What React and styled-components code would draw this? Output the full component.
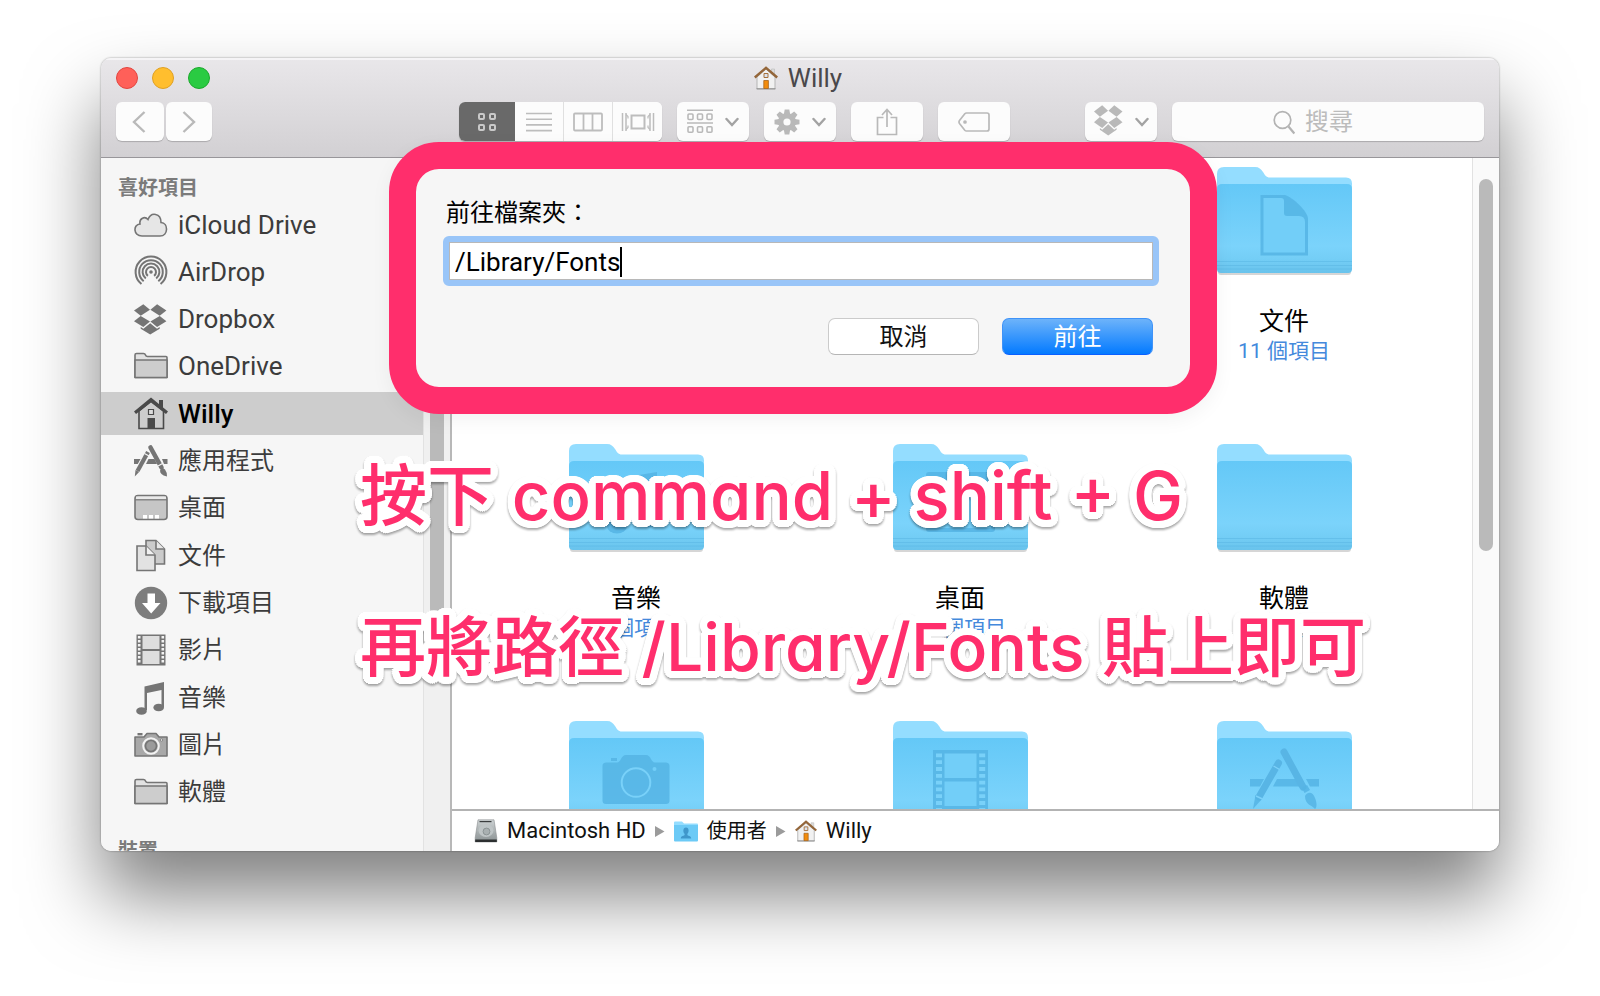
import React from 'react';
import styled, { createGlobalStyle } from 'styled-components';

const GlobalStyle = createGlobalStyle`
  * {
    box-sizing: border-box;
  }
  body {
    margin: 0;
    background: #fff;
    font-family: Roboto, "Noto Sans CJK TC", sans-serif;
  }
  button,
  input {
    font: inherit;
    margin: 0;
    padding: 0;
    border: 0;
  }
  a {
    color: inherit;
    text-decoration: none;
  }
  svg {
    display: block;
    flex: none;
  }
`;

const Page = styled.main`
  min-height: 100vh;
  padding: 58px 101px 145px;
  overflow: hidden;
`;
const Window = styled.section`
  position: relative;
  display: flex;
  flex-direction: column;
  height: calc(100vh - 203px);
`;
const Frame = styled.div`
  flex: 1;
  min-height: 0;
  display: flex;
  flex-direction: column;
  border-radius: 10px;
  overflow: hidden;
  background: #fff;
  box-shadow: 0 0 2px rgba(0, 0, 0, 0.45), 0 44px 75px rgba(0, 0, 0, 0.5);
`;

const Header = styled.header`
  padding: 0 15px 16px;
  border-bottom: 1px solid #98969a;
  background: linear-gradient(#e9e7ea, #d2d0d3);
  box-shadow: inset 0 2px 0 #f5f4f6;
`;
const TitleRow = styled.div`
  display: grid;
  grid-template-columns: 1fr auto 1fr;
  align-items: center;
  height: 40px;
  margin-bottom: 4px;
`;
const Lights = styled.div`
  display: flex;
  gap: 14px;
`;
const Light = styled.button`
  width: 22px;
  height: 22px;
  border-radius: 50%;
  border: 1px solid ${(p) => p.$edge};
  background: ${(p) => p.$color};
`;
const Title = styled.h1`
  display: flex;
  align-items: center;
  gap: 10px;
  margin: 0;
  padding-right: 4px;
  font-size: 26px;
  font-weight: 400;
  line-height: 30px;
  color: #4a484b;
`;
const Toolbar = styled.div`
  display: flex;
  gap: 15px;
`;
const Nav = styled.div`
  display: flex;
  gap: 2px;
  width: 328px;
`;
const ToolButton = styled.button`
  display: flex;
  align-items: center;
  justify-content: center;
  gap: 12px;
  width: ${(p) => p.$width || 72}px;
  height: 39px;
  border-radius: 6px;
  background: #fcfcfc;
  color: #b9b9b9;
  box-shadow: 0 1px 1px rgba(0, 0, 0, 0.2);
  margin-left: ${(p) => (p.$push ? 'auto' : 0)};
`;
const Views = styled.div`
  display: flex;
  border-radius: 6px;
  overflow: hidden;
  background: #fcfcfc;
  box-shadow: 0 1px 1px rgba(0, 0, 0, 0.2);
`;
const ViewButton = styled.button`
  display: flex;
  align-items: center;
  justify-content: center;
  width: ${(p) => (p.$active ? 56 : 49)}px;
  height: 39px;
  border-right: 1px solid #e0e0e0;
  background: ${(p) => (p.$active ? '#696969' : '#fcfcfc')};
  color: ${(p) => (p.$active ? '#c9c9c9' : '#bdbdbd')};
  &:first-child,
  &:last-child {
    border-right: 0;
  }
`;
const Search = styled.label`
  display: flex;
  align-items: center;
  gap: 10px;
  width: 312px;
  height: 39px;
  padding-left: 101px;
  border-radius: 6px;
  background: #fcfcfc;
  box-shadow: 0 1px 1px rgba(0, 0, 0, 0.2);
`;
const SearchInput = styled.input`
  width: 100%;
  min-width: 0;
  background: transparent;
  font-size: 24px;
  line-height: 36px;
  outline: none;
  &::placeholder {
    color: #bcbcbc;
    opacity: 1;
  }
`;

const Body = styled.div`
  flex: 1;
  min-height: 0;
  display: flex;
`;
const Sidebar = styled.nav`
  flex: none;
  width: 322px;
  padding-top: 15px;
  background: #f6f6f6;
  overflow: hidden;
`;
const SideHeading = styled.h2`
  margin: 0;
  padding-left: 17px;
  font-size: 20px;
  font-weight: 700;
  line-height: 30px;
  color: #7b7b7b;
`;
const SideList = styled.ul`
  display: flex;
  flex-direction: column;
  justify-content: space-between;
  height: 611px;
  margin: 0 0 22px;
  padding: 0;
  list-style: none;
`;
const SideLink = styled.a`
  display: flex;
  align-items: center;
  gap: 10px;
  height: 43px;
  padding-left: 33px;
  font-size: ${(p) => (p.$latin ? 26 : 24)}px;
  font-weight: ${(p) => (p.$active ? 500 : 400)};
  line-height: 36px;
  color: ${(p) => (p.$active ? '#000' : '#3c3c3c')};
  background: ${(p) => (p.$active ? '#cdcdcd' : 'transparent')};
`;
const Track = styled.div`
  flex: none;
  display: flex;
  justify-content: center;
  width: ${(p) => (p.$side ? 29 : 27)}px;
  padding-top: ${(p) => (p.$side ? 17 : 21)}px;
  border-left: 1px solid #e2e2e2;
  border-right: ${(p) => (p.$side ? '2px solid #b8b8b8' : '0')};
  background: ${(p) => (p.$side ? '#f0f0f0' : '#fafafa')};
`;
const Thumb = styled.div`
  width: 14px;
  height: ${(p) => p.$height}px;
  border-radius: 7px;
  background: #bababa;
`;
const Main = styled.div`
  flex: 1;
  min-width: 0;
  display: flex;
  flex-direction: column;
`;
const Content = styled.div`
  flex: 1;
  min-height: 0;
  display: flex;
`;
const Files = styled.div`
  flex: 1;
  display: grid;
  grid-template-columns: repeat(3, 1fr);
  grid-auto-rows: 277px;
  padding: 9px 26px 0 22px;
  overflow: hidden;
`;
const File = styled.a`
  display: flex;
  flex-direction: column;
  align-items: center;
  &:first-child {
    grid-column: 3;
  }
`;
const FileName = styled.span`
  margin-top: 29px;
  font-size: 25px;
  line-height: 32px;
  color: #000;
`;
const FileCount = styled.span`
  font-size: 21px;
  line-height: 26px;
  color: #4489dc;
`;
const PathBar = styled.footer`
  flex: none;
  display: flex;
  align-items: center;
  gap: 9px;
  height: 42px;
  padding: 0 22px;
  border-top: 2px solid #b3b3b3;
  background: #fff;
`;
const Crumb = styled.a`
  display: flex;
  align-items: center;
  gap: 9px;
  font-size: ${(p) => (p.$latin ? 22 : 20)}px;
  line-height: 30px;
  color: #111;
`;

const Dialog = styled.form`
  position: absolute;
  top: 84px;
  left: 288px;
  right: 282px;
  display: flex;
  flex-direction: column;
  height: 272px;
  padding: 25px 31px 32px 27px;
  border: 27px solid #ff2e6c;
  border-radius: 50px;
  background: #f6f6f6;
  box-shadow: 0 6px 20px rgba(0, 0, 0, 0.05);
`;
const DialogLabel = styled.label`
  padding-left: 3px;
  font-size: 24px;
  line-height: 38px;
  color: #000;
`;
const Field = styled.div`
  display: flex;
  align-items: center;
  height: 50px;
  margin-top: 4px;
  padding: 2px 0 0 6px;
  border: 6px solid #99c5f8;
  border-radius: 6px;
  background: #fff;
  box-shadow: inset 0 0 0 1px #b8b8b8;
`;
const PathInput = styled.input`
  field-sizing: content;
  background: transparent;
  font-size: 26px;
  line-height: 34px;
  outline: none;
`;
const Caret = styled.span`
  width: 2px;
  height: 30px;
  background: #000;
`;
const Actions = styled.div`
  display: flex;
  justify-content: flex-end;
  gap: 23px;
  margin-top: 32px;
  padding-right: 6px;
`;
const Action = styled.button`
  width: 151px;
  height: 37px;
  border: 1px solid ${(p) => (p.$primary ? '#3f93f8' : '#cbcbcb')};
  border-bottom-color: ${(p) => (p.$primary ? '#0a5fff' : '#b5b5b5')};
  border-radius: 7px;
  font-size: 24px;
  line-height: 34px;
  color: ${(p) => (p.$primary ? '#fff' : '#111')};
  background: ${(p) => (p.$primary ? 'linear-gradient(#6db3fa, #037aff)' : '#fff')};
`;

// rounded white outline, built from rings of hard shadows
const outline = [
  [7, 0], [7, 2], [6, 4], [5, 5], [4, 6], [2, 7], [0, 7],
  [4, 0], [3, 3], [0, 4],
]
  .flatMap(([x, y]) => [[x, y], [-x, y], [x, -y], [-x, -y]])
  .map(([x, y]) => `${x}px ${y}px 0 #fff`)
  .join(', ');

const Notes = styled.div`
  position: absolute;
  top: 388px;
  left: 259px;
`;
const Note = styled.p`
  margin: 0 0 51px;
  font-family: Inter, "Noto Sans CJK TC", sans-serif;
  font-size: ${(p) => (p.$large ? 67 : 66)}px;
  font-weight: 500;
  line-height: 100px;
  font-feature-settings: "cv11";
  white-space: nowrap;
  color: #ff2e6c;
  text-shadow: ${outline};
  filter: drop-shadow(0 2px 1px rgba(0, 0, 0, 0.35));
`;

const Chevron = () => (
  <svg width="14" height="10" viewBox="0 0 14 10" fill="none" stroke="#a3a3a3" strokeWidth="2.4" strokeLinecap="round">
    <path d="M1.5 2 7 8l5.500-6" />
  </svg>
);

const House = ({ size }) => (
  <svg width={size} height={size} viewBox="0 0 24 24">
    <path d="M17.500 3h3v5h-3z" fill="#dcdcdc" stroke="#b9b9b9" strokeWidth=".6" />
    <path d="M3 11 12 3l9 8v12H3z" fill="#f1f1f1" stroke="#b5b5b5" />
    <path d="M2.500 22.800h19" stroke="#8e8e8e" />
    <path d="M.8 11.500 12 1.800l11.200 9.700" fill="none" stroke="#94663a" strokeWidth="2.400" />
    <path d="M10 7.500h4v4h-4z" fill="#dce4ee" stroke="#a8713a" />
    <path d="M9.800 14.500h4.600v8H9.800z" fill="#f28c0c" stroke="#a9641a" strokeWidth=".8" />
  </svg>
);

const DropboxShape = () => (
  <g fill="currentColor">
    <path d="M0 6.500 9.300.3 16 5.800 6.700 11.800z" />
    <path d="M32.400 6.500 23.100.3l-6.700 5.500 9.300 6z" />
    <path d="M0 17.300l6.700-5.400L16 17.500l-6.700 5.500z" />
    <path d="M32.400 17.300l-6.700-5.400-9.300 5.600 6.700 5.500z" />
    <path d="M16.200 19.300 9.400 24.800l-2.700-1.700v1.700l9.500 5.600 9.500-5.600v-1.700L23 24.800z" />
  </g>
);

const Gear = () => (
  <svg width="26" height="26" viewBox="-13 -13 26 26">
    <circle r="6.300" fill="none" stroke="currentColor" strokeWidth="5.400" />
    {[0, 45, 90, 135, 180, 225, 270, 315].map((a) => (
      <path key={a} d="M-2.300-12.500h4.600l.8 4.500h-6.200z" fill="currentColor" transform={`rotate(${a})`} />
    ))}
  </svg>
);

const arc = (r) => {
  const x = r * 0.62;
  const y = r * 0.78;
  return `M${17 - x} ${17 + y}A${r} ${r} 0 1 1 ${17 + x} ${17 + y}`;
};

const line = { fill: 'none', stroke: '#757575', strokeWidth: 1.6 };

const sideIcons = {
  cloud: (
    <path
      d="M8 28C-1 28-1 16.500 6 16 5 10 11 8 14 11.500 17 3.500 27 5 27 14.500c7.500.5 7.500 13.500-1 13.500z"
      {...line}
      fill="#e6e6e6"
    />
  ),
  airdrop: (
    <g {...line} strokeWidth="2">
      <path d={arc(15.4)} />
      <path d={arc(11.8)} />
      <path d={arc(8.4)} />
      <path d={arc(5)} />
      <circle cx="17" cy="17" r="1.800" fill="#757575" stroke="none" />
    </g>
  ),
  dropbox: (
    <g transform="translate(0 2)" color="#757575">
      <DropboxShape />
    </g>
  ),
  folder: (
    <g {...line} strokeLinejoin="round">
      <path d="M1 28.500V6q0-1.500 1.500-1.500h7q1.500 0 2 1.500t2 1.500H32q1 0 1 1v20z" fill="#e2e2e2" />
      <path d="M1 11h32v17.500H1z" fill="#cdcdcd" />
    </g>
  ),
  home: (
    <g>
      <path d="M25 3h4v9h-4z" fill="#4a4a4a" />
      <path d="M5 14 17 4l12.500 10v17.500H5z" fill="#cdcdcd" stroke="#4a4a4a" strokeWidth="1.600" />
      <path d="m0 14.500 17-14 17 14-2 2.500L17 5.500 2 17z" fill="#4a4a4a" />
      <path d="M14.500 12.500h5v5h-5z" fill="#dcdcdc" stroke="#4a4a4a" strokeWidth="1.200" />
      <path d="M13.500 21h7.500v10.500h-7.500z" fill="#4a4a4a" />
    </g>
  ),
  apps: (
    <g>
      <path d="M0 15h8l-2.500 5H0zM14.500 15h6l2.500 5H12zM28 15h5.500v5H30z" fill="#757575" />
      <path d="m16.500 3.500 11 20" stroke="#757575" strokeWidth="4.600" strokeLinecap="round" />
      <path d="M26 26.500q2.500-3.500 5-1 2 2.500 2 7-4-1-5.500-2.500T26 26.500z" fill="#757575" />
      <path d="M14 8 3.500 27" stroke="#f6f6f6" strokeWidth="6.400" />
      <path d="M14 8 3.500 27" stroke="#757575" strokeWidth="4.200" />
      <path d="m1.500 26 3.600 2L.8 32.500z" fill="#757575" />
      <path d="m10.500 9.500 4.500 2.500M24 22l4.500-2.500" stroke="#f6f6f6" strokeWidth="1.200" />
    </g>
  ),
  desktop: (
    <g>
      <rect x="1" y="4.500" width="32" height="24" rx="3" {...line} fill="#c6c6c6" />
      <path d="M2 5.500h30v2.800H2z" fill="#e9e9e9" />
      <path d="M1 8.800h32" {...line} strokeWidth="1.200" />
      <path d="M9 24h4v3.600H9zM15 24h4v3.600h-4zM21 24h4v3.600h-4z" fill="#fff" />
    </g>
  ),
  docs: (
    <g {...line}>
      <path d="M12 1.500h10L30.500 10v15H12z" fill="#cbcbcb" />
      <path d="M22 1.500V10h8.500" fill="#e8e8e8" />
      <path d="M3 7h9l9 9v15.500H3z" fill="#e2e2e2" />
      <path d="M12 7v9h9" fill="#f1f1f1" />
    </g>
  ),
  download: (
    <g>
      <circle cx="17" cy="17" r="16.200" fill="#7d7d7d" />
      <path d="M13.500 7.500h7.500V17h5.500L17.200 27.500 8 17h5.500z" fill="#fff" />
    </g>
  ),
  film: (
    <g>
      <path d="M2.500 1.500h29v31h-29z" fill="#757575" />
      <path d="M8.500 3h17v13h-17zM8.500 18h17v13h-17z" fill="#dedede" />
      <path d="M5.200 3v28M28.800 3v28" stroke="#f3f3f3" strokeWidth="2.600" strokeDasharray="2.400 1.600" />
    </g>
  ),
  music: (
    <g fill="#757575">
      <path d="M10.500 5.500 30 1v25h-2.500V9L13 12v17h-2.500z" />
      <ellipse cx="7.500" cy="30" rx="5.300" ry="3.800" />
      <ellipse cx="24.700" cy="26.500" rx="5.300" ry="3.800" />
    </g>
  ),
  camera: (
    <g {...line}>
      <path d="M3.500 6.200h5" strokeWidth="2.400" />
      <path d="M1 9h9l3-3.500h9L25 9h8v19H1z" fill="#a8a8a8" strokeLinejoin="round" />
      <circle cx="17" cy="18" r="7.800" stroke="#f3f3f3" strokeWidth="2" fill="#a8a8a8" />
      <circle cx="17" cy="18" r="5.500" fill="#9b9b9b" />
      <circle cx="27.500" cy="12" r="1.200" fill="#eee" strokeWidth=".8" />
    </g>
  ),
};

const glyph = { fill: '#55b4e4', fillOpacity: 0.85 };
const cut = { fill: '#72cef8' };

const folderGlyphs = {
  docs: (
    <g>
      <path d="M43.500 28H68c7 2 23 16 23 24v36.500H43.500z" {...glyph} />
      <path d="M46.500 31H64q3 0 3 3v12q0 3 3 3h12q6 0 6 6v30.500H46.500z" {...cut} />
    </g>
  ),
  music: (
    <g {...glyph}>
      <path d="M52 34 88 28v47h-7V44l-22 4v34h-7z" />
      <ellipse cx="48" cy="82" rx="10" ry="7.500" />
      <ellipse cx="79" cy="76" rx="10" ry="7.500" />
    </g>
  ),
  desktop: (
    <g>
      <rect x="33" y="28" width="69" height="60" rx="3" {...glyph} />
      <path d="M37 38h61v46H37z" {...cut} />
    </g>
  ),
  camera: (
    <g>
      <path d="M42 37h6v3h-6z" {...glyph} />
      <path d="M37 41.500h11c4 0 4-7.500 9-7.500h20c5 0 5 7.500 9 7.500h11q3.500 0 3.500 3.500v34.500q0 3.500-3.500 3.500H37q-3.500 0-3.500-3.500V45q0-3.500 3.500-3.500z" {...glyph} />
      <circle cx="67" cy="61.500" r="14.300" fill="none" stroke="#79d1f9" strokeWidth="2" />
      <circle cx="85.500" cy="48" r="2" {...cut} />
    </g>
  ),
  film: (
    <g>
      <path d="M40 29h55v60H40z" {...glyph} />
      <path d="M51.500 32.500h32V57h-32zM51.500 60.500h32V85h-32z" {...cut} />
      <path d="M46 32.500V88M89.200 32.500V88" stroke="#79d1f9" strokeWidth="6" strokeDasharray="3.800 3" />
    </g>
  ),
  apps: (
    <g>
      <path d="M33 58h14l-4 7.500H33zM60 58h20l4 7.500H56zM89 58h13v7.500h-9z" {...glyph} />
      <path d="m67 31 19 35" stroke="#58b5e5" strokeWidth="7" strokeLinecap="round" />
      <path d="m85 67 5-3 3 5-5.500 3z" {...glyph} />
      <path d="M88 75c3-5 8-4 10 2 2 5 2 9 0 11-3-4-10-4-10-13z" {...glyph} />
      <path d="M61.500 42 42 76" stroke="#58b5e5" strokeWidth="7" strokeLinecap="round" />
      <path d="m38.500 74 6.500 4-9 10z" {...glyph} />
      <path d="m56.500 45 6 3.500M39 75l6.500 3" stroke="#7dd2fa" strokeWidth="1.400" />
    </g>
  ),
};

const FolderDefs = () => (
  <svg width="0" height="0" aria-hidden="true">
    <defs>
      <linearGradient id="folder-front" x1="0" y1="0" x2="0" y2="1">
        <stop offset="0" stopColor="#64c8f7" />
        <stop offset="0.700" stopColor="#7bd3fb" />
        <stop offset="0.840" stopColor="#74cef6" />
        <stop offset="1" stopColor="#69c3ec" />
      </linearGradient>
      <linearGradient id="disk" x1="0" y1="0" x2="0" y2="1">
        <stop offset="0" stopColor="#cdd2d3" />
        <stop offset="1" stopColor="#8b9293" />
      </linearGradient>
    </defs>
  </svg>
);

const Folder = ({ kind }) => (
  <svg width="137" height="110" viewBox="-1 0 137 110">
    <path d="M1 100h133v5q0 3-3 3H4q-3 0-3-3z" fill="#000" opacity=".16" />
    <path d="M0 7q0-7 7-7h31c4 0 6 2 8 5s3 5.500 7 5.500h76q6 0 6 6V60H0z" fill="#94ddff" />
    <path d="M0 22q0-5 5-5h125q5 0 5 5v80q0 4-4 4H4q-4 0-4-4z" fill="url(#folder-front)" />
    <path d="M0 94.500h135M0 98.500h135M0 102h135" stroke="#5cb8e4" strokeOpacity=".6" />
    {folderGlyphs[kind]}
  </svg>
);

const Disk = () => (
  <svg width="24" height="24" viewBox="0 0 24 24">
    <path d="M4 .8h16l2.800 18v4.200H1.200v-4.200z" fill="url(#disk)" stroke="#8b8f90" strokeWidth=".6" />
    <path d="M1.200 20.500h21.600V23H1.200z" fill="#2c2f30" />
    <path d="M5.500 2.600h12" stroke="#3a3d3e" strokeWidth="1.200" />
    <ellipse cx="12" cy="11.500" rx="7.500" ry="6.500" fill="#bfc5c6" />
    <circle cx="12.500" cy="12.500" r="3.400" fill="#a9b0b1" stroke="#8c9495" />
  </svg>
);

const UsersFolder = () => (
  <svg width="24" height="21" viewBox="0 0 24 21">
    <path d="M0 1.500Q0 .5 1 .5h7l2 2h13q1 0 1 1V15H0z" fill="#94ddff" />
    <path d="M0 4h24v15.500q0 1-1 1H1q-1 0-1-1z" fill="#6ccaf6" />
    <path d="M12 6.500c3.500 0 3 5 1.400 6.300v1.300c0 .6 3.800.8 3.800 3.400H6.800c0-2.600 3.800-2.800 3.800-3.400v-1.300C9 11.500 8.500 6.500 12 6.500z" fill="#3f97cb" />
  </svg>
);

const Arrow = () => (
  <svg width="10" height="11" viewBox="0 0 10 11">
    <path d="M0 0v11l9.500-5.500z" fill="#9b9b9b" />
  </svg>
);

const places = [
  { icon: 'cloud', name: 'iCloud Drive', latin: true },
  { icon: 'airdrop', name: 'AirDrop', latin: true },
  { icon: 'dropbox', name: 'Dropbox', latin: true },
  { icon: 'folder', name: 'OneDrive', latin: true },
  { icon: 'home', name: 'Willy', latin: true, active: true },
  { icon: 'apps', name: '應用程式' },
  { icon: 'desktop', name: '桌面' },
  { icon: 'docs', name: '文件' },
  { icon: 'download', name: '下載項目' },
  { icon: 'film', name: '影片' },
  { icon: 'music', name: '音樂' },
  { icon: 'camera', name: '圖片' },
  { icon: 'folder', name: '軟體' },
];

const files = [
  { kind: 'docs', name: '文件', count: '11 個項目' },
  { kind: 'music', name: '音樂', count: '3 個項目' },
  { kind: 'desktop', name: '桌面', count: '12 個項目' },
  { kind: 'plain', name: '軟體', count: '5 個項目' },
  { kind: 'camera' },
  { kind: 'film' },
  { kind: 'apps' },
];

const ViewSwitch = () => (
  <Views>
    <ViewButton type="button" $active aria-label="圖像">
      <svg width="20" height="20" viewBox="0 0 20 20" fill="none" stroke="currentColor" strokeWidth="2">
        <rect x="2" y="2" width="5" height="5" rx="1" />
        <rect x="13" y="2" width="5" height="5" rx="1" />
        <rect x="2" y="13" width="5" height="5" rx="1" />
        <rect x="13" y="13" width="5" height="5" rx="1" />
      </svg>
    </ViewButton>
    <ViewButton type="button" aria-label="列表">
      <svg width="26" height="20" viewBox="0 0 26 20" stroke="currentColor" strokeWidth="1.600">
        <path d="M0 1.500h26M0 7.200h26M0 12.900h26M0 18.600h26" />
      </svg>
    </ViewButton>
    <ViewButton type="button" aria-label="直欄">
      <svg width="30" height="20" viewBox="0 0 30 20" fill="none" stroke="currentColor" strokeWidth="1.800">
        <rect x="1" y="1.500" width="28" height="17" rx="1" />
        <path d="M10.500 1.500v17M19.500 1.500v17" />
      </svg>
    </ViewButton>
    <ViewButton type="button" aria-label="Cover Flow">
      <svg width="34" height="20" viewBox="0 0 34 20" fill="none" stroke="currentColor" strokeWidth="1.500">
        <rect x="10.500" y="3.500" width="13" height="13" strokeWidth="2" />
        <path d="M1.500 1v18M5 1v18M32.500 1v18M29 1v18" />
        <path d="M5 2.500 7 4.500v2M5 17.500l2-2v-2M29 2.500l-2 2v2M29 17.500l-2-2v-2" strokeWidth="1.200" />
      </svg>
    </ViewButton>
  </Views>
);

const App = () => {
  return (
    <Page>
      <GlobalStyle />
      <FolderDefs />
      <Window>
        <Frame>
          <Header>
            <TitleRow>
              <Lights>
                <Light type="button" aria-label="關閉" $color="#ff6059" $edge="#e2453f" />
                <Light type="button" aria-label="縮到最小" $color="#ffbe2e" $edge="#dfa023" />
                <Light type="button" aria-label="放大" $color="#2acb42" $edge="#1ba92c" />
              </Lights>
              <Title>
                <House size={24} />
                Willy
              </Title>
            </TitleRow>
            <Toolbar>
              <Nav>
                <ToolButton type="button" $width={48} aria-label="返回">
                  <svg width="16" height="22" viewBox="0 0 16 22" fill="none" stroke="currentColor" strokeWidth="2.400">
                    <path d="M12.500 1 2 11l10.500 10" />
                  </svg>
                </ToolButton>
                <ToolButton type="button" $width={46} aria-label="往前">
                  <svg width="14" height="22" viewBox="0 0 14 22" fill="none" stroke="currentColor" strokeWidth="2.400">
                    <path d="M1.500 1 12 11 1.500 21" />
                  </svg>
                </ToolButton>
              </Nav>
              <ViewSwitch />
              <ToolButton type="button" aria-label="排列">
                <svg width="26" height="25" viewBox="0 0 26 25" fill="none" stroke="currentColor" strokeWidth="1.600">
                  <path d="M0 1.200h26M0 14h26" />
                  {[1, 10.5, 20].map((x) => (
                    <g key={x}>
                      <rect x={x} y="5" width="5" height="5.500" rx="1" />
                      <rect x={x} y="17.800" width="5" height="5.500" rx="1" />
                    </g>
                  ))}
                </svg>
                <Chevron />
              </ToolButton>
              <ToolButton type="button" aria-label="動作">
                <Gear />
                <Chevron />
              </ToolButton>
              <ToolButton type="button" aria-label="分享">
                <svg width="22" height="28" viewBox="0 0 22 28" fill="none" stroke="currentColor" strokeWidth="1.700">
                  <path d="M7.500 9.500H1.500v17h19v-17h-6M11 19V2M6 7l5-5.500L16 7" />
                </svg>
              </ToolButton>
              <ToolButton type="button" aria-label="標籤">
                <svg width="32" height="22" viewBox="0 0 32 22" fill="none" stroke="currentColor" strokeWidth="1.700">
                  <path d="M8.500 2H29q2 0 2 2v14q0 2-2 2H8.500q-1 0-1.700-.8L1.500 12.500q-1-1.500 0-3L6.800 2.800Q7.500 2 8.500 2z" />
                  <circle cx="7" cy="11" r="1" fill="currentColor" />
                </svg>
              </ToolButton>
              <ToolButton type="button" $push aria-label="Dropbox">
                <svg width="29" height="34" viewBox="0 0 33 34" preserveAspectRatio="none">
                  <DropboxShape />
                </svg>
                <Chevron />
              </ToolButton>
              <Search>
                <svg width="22" height="26" viewBox="0 0 22 26" fill="none" stroke="#b3b3b3" strokeWidth="1.700">
                  <circle cx="9.500" cy="11" r="8.300" />
                  <path d="M15.500 17.500 21.300 24.500" strokeWidth="2.200" />
                </svg>
                <SearchInput type="search" placeholder="搜尋" aria-label="搜尋" />
              </Search>
            </Toolbar>
          </Header>
          <Body>
            <Sidebar>
              <SideHeading>喜好項目</SideHeading>
              <SideList>
                {places.map((place) => (
                  <li key={place.name}>
                    <SideLink href="#" $latin={place.latin} $active={place.active}>
                      <svg width="34" height="34" viewBox="0 0 34 34">
                        {sideIcons[place.icon]}
                      </svg>
                      {place.name}
                    </SideLink>
                  </li>
                ))}
              </SideList>
              <SideHeading>裝置</SideHeading>
            </Sidebar>
            <Track $side>
              <Thumb $height={441} />
            </Track>
            <Main>
              <Content>
                <Files>
                  {files.map((file) => (
                    <File key={file.kind} href="#">
                      <Folder kind={file.kind} />
                      {file.name && <FileName>{file.name}</FileName>}
                      {file.count && <FileCount>{file.count}</FileCount>}
                    </File>
                  ))}
                </Files>
                <Track>
                  <Thumb $height={372} />
                </Track>
              </Content>
              <PathBar>
                <Crumb href="#" $latin>
                  <Disk />
                  Macintosh HD
                </Crumb>
                <Arrow />
                <Crumb href="#">
                  <UsersFolder />
                  使用者
                </Crumb>
                <Arrow />
                <Crumb href="#" $latin>
                  <House size={22} />
                  Willy
                </Crumb>
              </PathBar>
            </Main>
          </Body>
        </Frame>
        <Dialog>
          <DialogLabel htmlFor="path">前往檔案夾：</DialogLabel>
          <Field>
            <PathInput id="path" type="text" defaultValue="/Library/Fonts" />
            <Caret />
          </Field>
          <Actions>
            <Action type="button">取消</Action>
            <Action type="button" $primary>
              前往
            </Action>
          </Actions>
        </Dialog>
        <Notes>
          <Note $large>按下 command + shift + G</Note>
          <Note>再將路徑 /Library/Fonts 貼上即可</Note>
        </Notes>
      </Window>
    </Page>
  );
};

export default App;
